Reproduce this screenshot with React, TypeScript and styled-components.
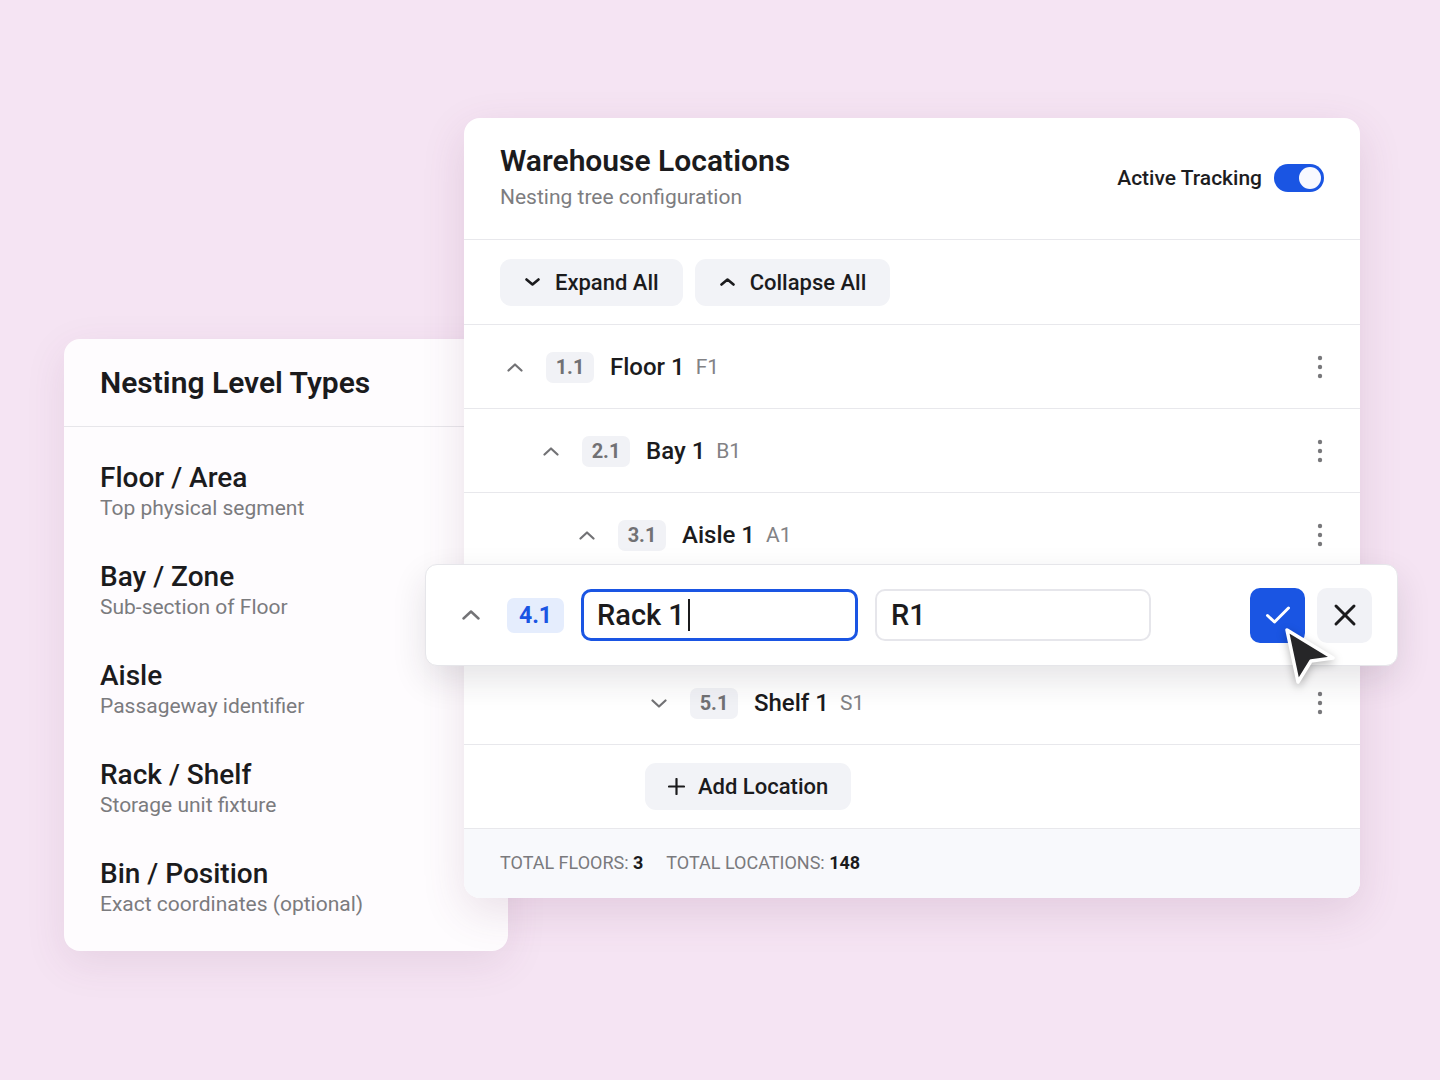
import React from 'react';
import styled, { createGlobalStyle } from 'styled-components';

const GlobalStyle = createGlobalStyle`
  html, body {
    margin: 0;
    padding: 0;
    background: #f5e4f3;
  }

  body {
    font-family: Roboto, 'Liberation Sans', Arial, sans-serif;
    color: #1b1b1d;
    -webkit-font-smoothing: antialiased;
  }
`;

interface Level {
  id: string;
  name: string;
  code: string;
  depth: number;
  open: boolean;
}

const levelTypes = [
  { title: 'Floor / Area', hint: 'Top physical segment' },
  { title: 'Bay / Zone', hint: 'Sub-section of Floor' },
  { title: 'Aisle', hint: 'Passageway identifier' },
  { title: 'Rack / Shelf', hint: 'Storage unit fixture' },
  { title: 'Bin / Position', hint: 'Exact coordinates (optional)' }
];

const upperLevels: Level[] = [
  { id: '1.1', name: 'Floor 1', code: 'F1', depth: 0, open: true },
  { id: '2.1', name: 'Bay 1', code: 'B1', depth: 1, open: true },
  { id: '3.1', name: 'Aisle 1', code: 'A1', depth: 2, open: true }
];

const shelfLevel: Level = { id: '5.1', name: 'Shelf 1', code: 'S1', depth: 4, open: false };

// two overlapping cards share grid tracks
const Stage = styled.div`
  width: 1440px;
  height: 1080px;
  display: grid;
  grid-template-columns: 64px 400px 44px 852px 1fr;
  grid-template-rows: 118px 221px 559px 53px 1fr;
`;

const LevelCard = styled.section`
  grid-column: 2 / 4;
  grid-row: 3 / 5;
  z-index: 1;
  background: #fefcfe;
  border-radius: 16px;
  box-shadow: 0 12px 40px rgba(110, 60, 100, 0.10);
  display: flex;
  flex-direction: column;
`;

const LevelHeader = styled.div`
  height: 88px;
  box-sizing: border-box;
  display: flex;
  align-items: center;
  padding: 0 36px;
  border-bottom: 1px solid #e7e6ea;
`;

const CardTitle = styled.h1`
  margin: 0;
  font-size: 30px;
  line-height: 36px;
  font-weight: 600;
  color: #1b1b1d;
`;

const LevelList = styled.div`
  display: flex;
  flex-direction: column;
  gap: 41px;
  padding: 35px 36px 0;
`;

const LevelItem = styled.div`
  display: flex;
  flex-direction: column;
  gap: 3px;
`;

const LevelName = styled.div`
  font-size: 28px;
  line-height: 31px;
  font-weight: 500;
  color: #1b1b1d;
`;

const LevelHint = styled.div`
  font-size: 21px;
  line-height: 24px;
  color: #7b7b7e;
`;

const TreeCard = styled.section`
  grid-column: 3 / 5;
  grid-row: 2 / 4;
  z-index: 2;
  background: #ffffff;
  border-radius: 16px;
  box-shadow: 0 14px 44px rgba(110, 60, 100, 0.14);
  display: flex;
  flex-direction: column;
`;

const TreeHeader = styled.header`
  height: 122px;
  box-sizing: border-box;
  padding: 25px 36px 0;
  display: flex;
  justify-content: space-between;
  align-items: flex-start;
  border-bottom: 1px solid #e8e8ec;
`;

const TitleBlock = styled.div`
  display: flex;
  flex-direction: column;
  gap: 6px;
`;

const Subtitle = styled.div`
  font-size: 21px;
  line-height: 24px;
  color: #7d7d80;
`;

const TrackingToggle = styled.label`
  display: flex;
  align-items: center;
  gap: 12px;
  margin-top: 21px;
  font-size: 21px;
  font-weight: 500;
  color: #1d1d1f;
`;

const Switch = styled.span<{ $on: boolean }>`
  width: 50px;
  height: 28px;
  border-radius: 14px;
  box-sizing: border-box;
  padding: 3px;
  background: ${(p) => (p.$on ? '#1a55e3' : '#d6d6dc')};
  display: flex;
  justify-content: ${(p) => (p.$on ? 'flex-end' : 'flex-start')};

  &::after {
    content: '';
    width: 22px;
    height: 22px;
    border-radius: 50%;
    background: #f8f9ff;
  }
`;

const Toolbar = styled.div`
  height: 85px;
  box-sizing: border-box;
  padding: 0 36px;
  display: flex;
  align-items: center;
  gap: 12px;
  border-bottom: 1px solid #e8e8ec;
`;

const SoftButton = styled.button`
  height: 47px;
  border: 0;
  border-radius: 11px;
  background: #f2f3f7;
  display: flex;
  align-items: center;
  gap: 15px;
  padding: 0 24px 0 25px;
  font-family: inherit;
  font-size: 22px;
  font-weight: 500;
  color: #1b1b1d;
  cursor: pointer;
`;

const TreeRow = styled.div<{ $depth: number }>`
  height: 84px;
  box-sizing: border-box;
  border-bottom: 1px solid #e8e8ec;
  display: flex;
  align-items: center;
  padding: 1px 28px 0 ${(p) => 43 + p.$depth * 36}px;
`;

const Caret = styled.span`
  width: 16px;
  display: flex;
  justify-content: center;
  color: #727275;
  margin-right: 23px;
`;

const IdBadge = styled.span<{ $active?: boolean }>`
  min-width: ${(p) => (p.$active ? 57 : 48)}px;
  height: ${(p) => (p.$active ? 35 : 31)}px;
  box-sizing: border-box;
  border-radius: 7px;
  display: inline-flex;
  align-items: center;
  justify-content: center;
  background: ${(p) => (p.$active ? '#e5edfd' : '#f1f2f6')};
  color: ${(p) => (p.$active ? '#1a55e3' : '#717174')};
  font-size: ${(p) => (p.$active ? 23 : 20)}px;
  font-weight: 700;
`;

const NodeName = styled.span`
  margin-left: 16px;
  font-size: 24px;
  font-weight: 500;
  color: #1b1b1d;
`;

const NodeCode = styled.span`
  margin-left: 11px;
  font-size: 21px;
  color: #828285;
`;

const MoreButton = styled.span`
  margin-left: auto;
  width: 24px;
  display: flex;
  justify-content: center;
  color: #78787b;
`;

const EditSlot = styled.div`
  height: 84px;
  box-sizing: border-box;
  border-bottom: 1px solid #e8e8ec;
  display: flex;
`;

const EditCard = styled.div`
  position: relative;
  z-index: 5;
  flex: 1;
  height: 102px;
  box-sizing: border-box;
  margin: -13px -38px 0 -39px;
  background: #ffffff;
  border: 1px solid #e6e6ea;
  border-radius: 12px;
  box-shadow: 0 14px 34px rgba(40, 30, 50, 0.12);
  display: flex;
  align-items: center;
  padding: 0 25px 0 36px;
`;

const EditCaret = styled.span`
  width: 18px;
  display: flex;
  color: #737376;
  margin-right: 27px;
`;

const NameField = styled.div<{ $focused?: boolean }>`
  width: ${(p) => (p.$focused ? 277 : 276)}px;
  height: 52px;
  box-sizing: border-box;
  margin-left: 17px;
  border-radius: 10px;
  border: ${(p) => (p.$focused ? '3px solid #1a55e3' : '2px solid #e6e6eb')};
  display: flex;
  align-items: center;
  padding-left: ${(p) => (p.$focused ? 13 : 14)}px;
  font-size: 29px;
  font-weight: 500;
  color: #1b1b1d;
`;

const TextCaret = styled.span`
  width: 2px;
  height: 32px;
  margin-left: 3px;
  background: #1b1b1d;
`;

const EditActions = styled.div`
  margin-left: auto;
  display: flex;
  gap: 12px;
`;

const IconButton = styled.button<{ $primary?: boolean }>`
  position: relative;
  width: 55px;
  height: 55px;
  border: 0;
  border-radius: 10px;
  padding: 0;
  display: flex;
  align-items: center;
  justify-content: center;
  background: ${(p) => (p.$primary ? '#1a55e3' : '#f1f2f6')};
  color: ${(p) => (p.$primary ? '#ffffff' : '#1b1b1d')};
  cursor: pointer;
`;

const Pointer = styled.svg`
  position: absolute;
  left: 33px;
  top: 38px;
  z-index: 6;
  filter: drop-shadow(0 3px 4px rgba(0, 0, 0, 0.28));
`;

const AddRow = styled.div`
  height: 84px;
  box-sizing: border-box;
  border-bottom: 1px solid #e8e8ec;
  display: flex;
  align-items: center;
  padding-left: 181px;
`;

const AddButton = styled(SoftButton)`
  gap: 13px;
  padding: 0 23px;
`;

const Footer = styled.footer`
  flex: 1;
  background: #f8f9fc;
  border-radius: 0 0 16px 16px;
  display: flex;
  align-items: center;
  gap: 23px;
  padding: 0 36px 2px;
  font-size: 18px;
  color: #7a7a7d;
  text-transform: uppercase;
`;

const Stat = styled.span`
  b {
    color: #1b1b1d;
    font-weight: 700;
  }
`;

function Chevron ({ up, size = 16, stroke = 2.2 }: { up: boolean; size?: number; stroke?: number }) {
  const h = Math.round(size * 0.55);

  return (
    <svg
      width={size}
      height={h}
      viewBox={`0 0 ${size} ${h}`}
      fill='none'
      stroke='currentColor'
      strokeWidth={stroke}
      strokeLinecap='round'
      strokeLinejoin='round'
    >
      {up
        ? <polyline points={`1.5,${h - 1.5} ${size / 2},1.5 ${size - 1.5},${h - 1.5}`} />
        : <polyline points={`1.5,1.5 ${size / 2},${h - 1.5} ${size - 1.5},1.5`} />}
    </svg>
  );
}

function Kebab () {
  return (
    <svg width='8' height='26' viewBox='0 0 8 26'>
      <circle cx='4' cy='4' r='2.2' fill='currentColor' />
      <circle cx='4' cy='13' r='2.2' fill='currentColor' />
      <circle cx='4' cy='22' r='2.2' fill='currentColor' />
    </svg>
  );
}

function NodeRow ({ level }: { level: Level }) {
  return (
    <TreeRow $depth={level.depth}>
      <Caret><Chevron up={level.open} /></Caret>
      <IdBadge>{level.id}</IdBadge>
      <NodeName>{level.name}</NodeName>
      <NodeCode>{level.code}</NodeCode>
      <MoreButton><Kebab /></MoreButton>
    </TreeRow>
  );
}

export default function App () {
  return (
    <>
      <GlobalStyle />
      <Stage>
        <LevelCard>
          <LevelHeader>
            <CardTitle>Nesting Level Types</CardTitle>
          </LevelHeader>
          <LevelList>
            {levelTypes.map((t) => (
              <LevelItem key={t.title}>
                <LevelName>{t.title}</LevelName>
                <LevelHint>{t.hint}</LevelHint>
              </LevelItem>
            ))}
          </LevelList>
        </LevelCard>

        <TreeCard>
          <TreeHeader>
            <TitleBlock>
              <CardTitle>Warehouse Locations</CardTitle>
              <Subtitle>Nesting tree configuration</Subtitle>
            </TitleBlock>
            <TrackingToggle>
              Active Tracking
              <Switch $on />
            </TrackingToggle>
          </TreeHeader>

          <Toolbar>
            <SoftButton>
              <Chevron up={false} size={15} stroke={2.6} />
              Expand All
            </SoftButton>
            <SoftButton>
              <Chevron up size={15} stroke={2.6} />
              Collapse All
            </SoftButton>
          </Toolbar>

          {upperLevels.map((l) => <NodeRow key={l.id} level={l} />)}

          <EditSlot>
            <EditCard>
              <EditCaret><Chevron up size={18} stroke={2.4} /></EditCaret>
              <IdBadge $active>4.1</IdBadge>
              <NameField $focused>Rack 1<TextCaret /></NameField>
              <NameField>R1</NameField>
              <EditActions>
                <IconButton $primary>
                  <svg width='26' height='20' viewBox='0 0 26 20' fill='none' stroke='currentColor' strokeWidth='3' strokeLinecap='round' strokeLinejoin='round'>
                    <polyline points='2.5,10.5 9.5,17 23.5,3' />
                  </svg>
                  <Pointer width='56' height='64' viewBox='-4 -4 56 64'>
                    <path
                      d='M0 0 L46 28 L24 31 L11 52 Z'
                      fill='#262628'
                      stroke='#ffffff'
                      strokeWidth='3.5'
                      strokeLinejoin='round'
                    />
                  </Pointer>
                </IconButton>
                <IconButton>
                  <svg width='24' height='24' viewBox='0 0 24 24' fill='none' stroke='currentColor' strokeWidth='3' strokeLinecap='round'>
                    <line x1='3' y1='3' x2='21' y2='21' />
                    <line x1='21' y1='3' x2='3' y2='21' />
                  </svg>
                </IconButton>
              </EditActions>
            </EditCard>
          </EditSlot>

          <NodeRow level={shelfLevel} />

          <AddRow>
            <AddButton>
              <svg width='17' height='17' viewBox='0 0 17 17' fill='none' stroke='currentColor' strokeWidth='2.2' strokeLinecap='round'>
                <line x1='8.5' y1='1' x2='8.5' y2='16' />
                <line x1='1' y1='8.5' x2='16' y2='8.5' />
              </svg>
              Add Location
            </AddButton>
          </AddRow>

          <Footer>
            <Stat>Total floors: <b>3</b></Stat>
            <Stat>Total locations: <b>148</b></Stat>
          </Footer>
        </TreeCard>
      </Stage>
    </>
  );
}
